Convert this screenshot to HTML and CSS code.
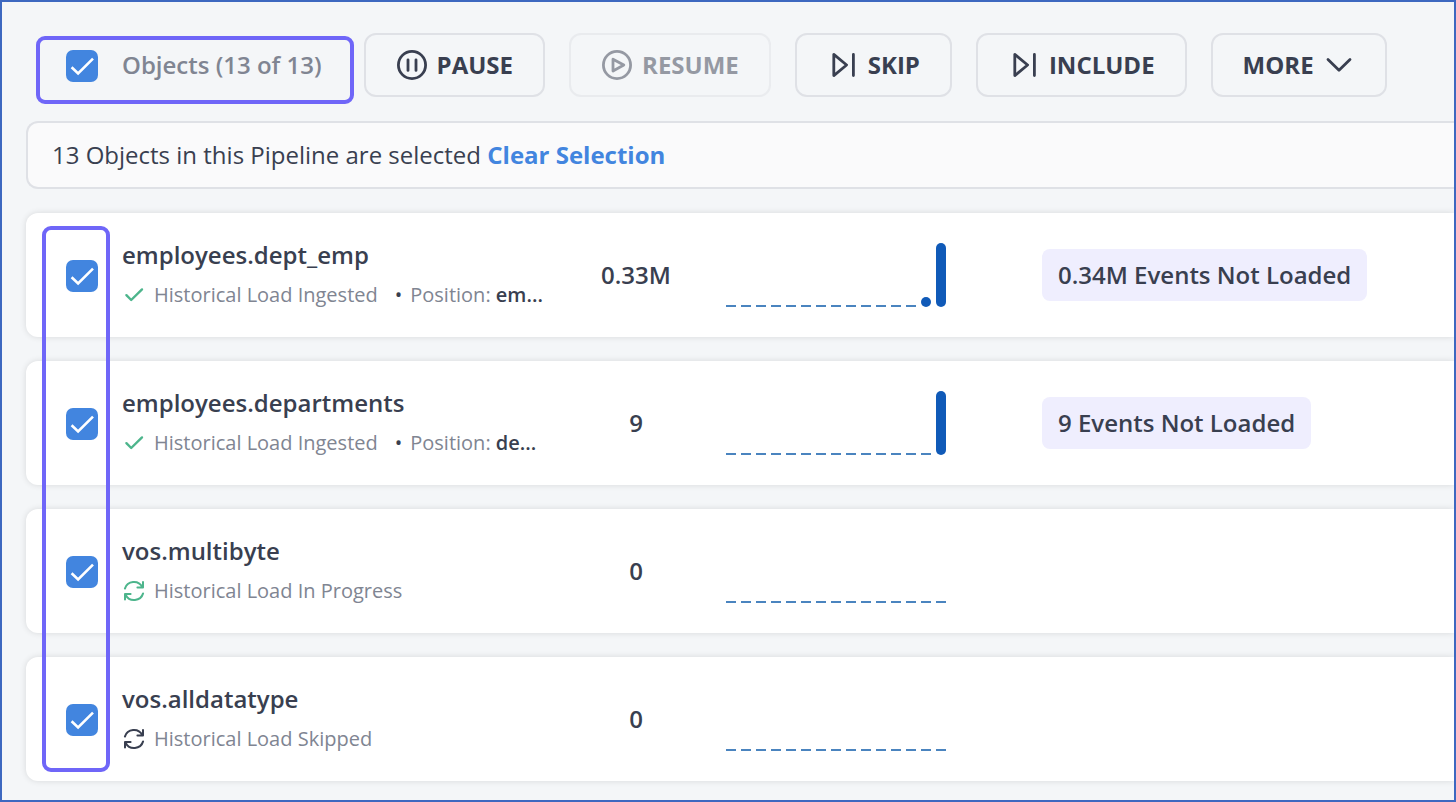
FILE: index.html
```html
<!DOCTYPE html>
<html lang="en">
<head>
<meta charset="utf-8">
<meta name="viewport" content="width=device-width, initial-scale=1">
<title>Pipeline Objects</title>
<link rel="stylesheet" href="styles.css">
</head>
<body>
<svg class="sprite" aria-hidden="true">
  <symbol id="sync" viewBox="0 0 24 24">
    <path d="M2.9 9.6A9.4 9.2 0 0 1 20.3 8M21.1 14.4A9.4 9.2 0 0 1 3.7 16M21 3v5.6h-5.6M3 20.6V15h5.6"/>
  </symbol>
  <symbol id="tick" viewBox="0 0 24 24">
    <path d="M4.4 12.2l4.8 4.8L20 6.4"/>
  </symbol>
  <symbol id="skip" viewBox="0 0 32 32">
    <path d="M6.8 5.4v21.2L19.6 16zM26.4 5.4v21.2"/>
  </symbol>
</svg>
<main class="frame">
  <header class="toolbar">
    <label class="select-all">
      <input class="checkbox" type="checkbox" checked>
      <span>Objects (13 of 13)</span>
    </label>
    <button class="button" type="button">
      <svg class="button-icon" viewBox="0 0 32 32"><circle cx="16" cy="16" r="13.6"/><path d="M12 10.8v10.6M20 10.8v10.6"/></svg>
      PAUSE
    </button>
    <button class="button" type="button" disabled>
      <svg class="button-icon" viewBox="0 0 32 32"><circle cx="16" cy="16" r="13.6"/><path d="M12 10.2v11.8L22.8 16z"/></svg>
      RESUME
    </button>
    <button class="button" type="button">
      <svg class="button-icon"><use href="#skip"/></svg>
      SKIP
    </button>
    <button class="button" type="button">
      <svg class="button-icon"><use href="#skip"/></svg>
      INCLUDE
    </button>
    <button class="button" type="button">
      MORE
      <svg class="button-icon" viewBox="0 0 32 32"><path d="M5 10.4l11 10.8 11-10.8"/></svg>
    </button>
  </header>

  <div class="banner">13 Objects in this Pipeline are selected <a class="clear" href="#">Clear Selection</a></div>

  <ul class="objects">
    <li class="object">
      <input class="checkbox" type="checkbox" aria-label="employees.dept_emp" checked>
      <div>
        <h2 class="name">employees.dept_emp</h2>
        <p class="status">
          <svg class="status-icon done tick"><use href="#tick"/></svg>
          <span>Historical Load Ingested</span>
          <span class="dot">•</span>
          <span>Position: <b class="position">em...</b></span>
        </p>
      </div>
      <span class="count">0.33M</span>
      <svg class="chart" viewBox="0 0 220 64"><path class="base" d="M0 63h190"/><circle class="bar" cx="200" cy="59" r="5"/><rect class="bar" x="210" width="10" height="64" rx="5"/></svg>
      <span class="badge">0.34M Events Not Loaded</span>
    </li>
    <li class="object">
      <input class="checkbox" type="checkbox" aria-label="employees.departments" checked>
      <div>
        <h2 class="name">employees.departments</h2>
        <p class="status">
          <svg class="status-icon done tick"><use href="#tick"/></svg>
          <span>Historical Load Ingested</span>
          <span class="dot">•</span>
          <span>Position: <b class="position">de...</b></span>
        </p>
      </div>
      <span class="count">9</span>
      <svg class="chart" viewBox="0 0 220 64"><path class="base" d="M0 63h210"/><rect class="bar" x="210" width="10" height="64" rx="5"/></svg>
      <span class="badge">9 Events Not Loaded</span>
    </li>
    <li class="object">
      <input class="checkbox" type="checkbox" aria-label="vos.multibyte" checked>
      <div>
        <h2 class="name">vos.multibyte</h2>
        <p class="status">
          <svg class="status-icon done"><use href="#sync"/></svg>
          <span>Historical Load In Progress</span>
        </p>
      </div>
      <span class="count">0</span>
      <svg class="chart" viewBox="0 0 220 64"><path class="base" d="M0 63h220"/></svg>
    </li>
    <li class="object">
      <input class="checkbox" type="checkbox" aria-label="vos.alldatatype" checked>
      <div>
        <h2 class="name">vos.alldatatype</h2>
        <p class="status">
          <svg class="status-icon"><use href="#sync"/></svg>
          <span>Historical Load Skipped</span>
        </p>
      </div>
      <span class="count">0</span>
      <svg class="chart" viewBox="0 0 220 64"><path class="base" d="M0 63h220"/></svg>
    </li>
  </ul>
</main>
</body>
</html>
```

FILE: styles.css
```css
:root {
  --ink: #393f50;
  --muted: #808592;
  --line: #dfe1e6;
  --blue: #4285df;
  --highlight: #6f66f8;
}

*,
*::after {
  box-sizing: border-box;
}

body {
  margin: 0;
  background: #f4f6f8;
  color: var(--ink);
  font: 400 24px/32px "Open Sans", "Noto Sans", sans-serif;
}

.sprite {
  position: absolute;
  width: 0;
  height: 0;
}

svg {
  flex: none;
  fill: none;
  stroke: currentColor;
  stroke-linecap: round;
  stroke-linejoin: round;
}

.frame {
  min-height: 100vh;
  padding: 31px 0 19px 24px;
  border: 2px solid #3d68c0;
  overflow: hidden;
}

.toolbar {
  display: flex;
  align-items: center;
  gap: 24px;
  padding-left: 40px;
}

.select-all {
  position: relative;
  display: flex;
  align-items: center;
  gap: 24px;
  padding-right: 18px;
  color: var(--muted);
  font-weight: 600;
  white-space: nowrap;
}

.select-all::after {
  content: "";
  position: absolute;
  inset: -12px -14px -22px -30px;
  border: 4px solid var(--highlight);
  border-radius: 9px;
  pointer-events: none;
}

.checkbox {
  flex: none;
  appearance: none;
  width: 32px;
  height: 32px;
  margin: 2px 0 0;
  border-radius: 7px;
  background: #fff;
  border: 2px solid var(--line);
}

.checkbox:checked {
  border: 0;
  background: var(--blue) url("data:image/svg+xml,%3Csvg xmlns='http://www.w3.org/2000/svg' viewBox='0 0 32 32'%3E%3Cpath d='M5.6 17.2l6.5 6.2L27 8.6' fill='none' stroke='%23fff' stroke-width='2.6'/%3E%3C/svg%3E");
}

.button {
  display: flex;
  align-items: center;
  gap: 9px;
  height: 64px;
  padding: 0 30px;
  border: 2px solid var(--line);
  border-radius: 12px;
  background: transparent;
  color: var(--ink);
  font: inherit;
  font-weight: 700;
}

.button:disabled {
  opacity: 0.5;
}

.button-icon {
  width: 32px;
  height: 32px;
  stroke-width: 2.8;
}

.banner {
  margin: 24px 0;
  padding: 16px 24px;
  border: 2px solid var(--line);
  border-right: 0;
  border-radius: 12px 0 0 12px;
  background: #fafafb;
}

.clear {
  color: var(--blue);
  font-weight: 700;
  text-decoration: none;
}

.objects {
  position: relative;
  display: grid;
  gap: 24px;
  margin: 0;
  padding: 0;
  list-style: none;
}

.objects::after {
  content: "";
  position: absolute;
  inset: 13px auto 9px 16px;
  width: 68px;
  border: 4px solid var(--highlight);
  border-radius: 9px;
  pointer-events: none;
}

.object {
  display: grid;
  grid-template-columns: 32px 448px 180px 220px 1fr;
  align-items: center;
  padding: 26px 0 26px 40px;
  border-radius: 12px 0 0 12px;
  background: #fff;
  box-shadow: 0 0 6px rgba(0, 0, 0, 0.12);
}

.object > div {
  padding-left: 24px;
}

.name {
  margin: 0 0 8px;
  font-size: 24px;
  line-height: 32px;
  font-weight: 600;
}

.status {
  display: flex;
  align-items: center;
  gap: 8px;
  margin: 0;
  color: var(--muted);
  font-size: 20px;
  line-height: 32px;
  white-space: nowrap;
}

.status-icon {
  width: 24px;
  height: 24px;
  color: var(--ink);
  stroke-width: 2;
}

.status-icon.done {
  color: #4db58c;
}

.status-icon.tick {
  stroke-width: 2.4;
}

.dot,
.position {
  color: var(--ink);
}

.dot {
  padding-left: 9px;
}

.position {
  font-weight: 600;
}

.count {
  font-weight: 600;
  text-align: center;
}

.chart {
  width: 220px;
  height: 64px;
}

.base {
  stroke: #4a84bf;
  stroke-width: 2;
  stroke-linecap: butt;
  stroke-dasharray: 10 5;
}

.bar {
  fill: #105ab8;
  stroke: none;
}

.badge {
  justify-self: start;
  margin-left: 96px;
  padding: 10px 16px;
  border-radius: 8px;
  background: #efeefe;
  font-weight: 600;
}
```
